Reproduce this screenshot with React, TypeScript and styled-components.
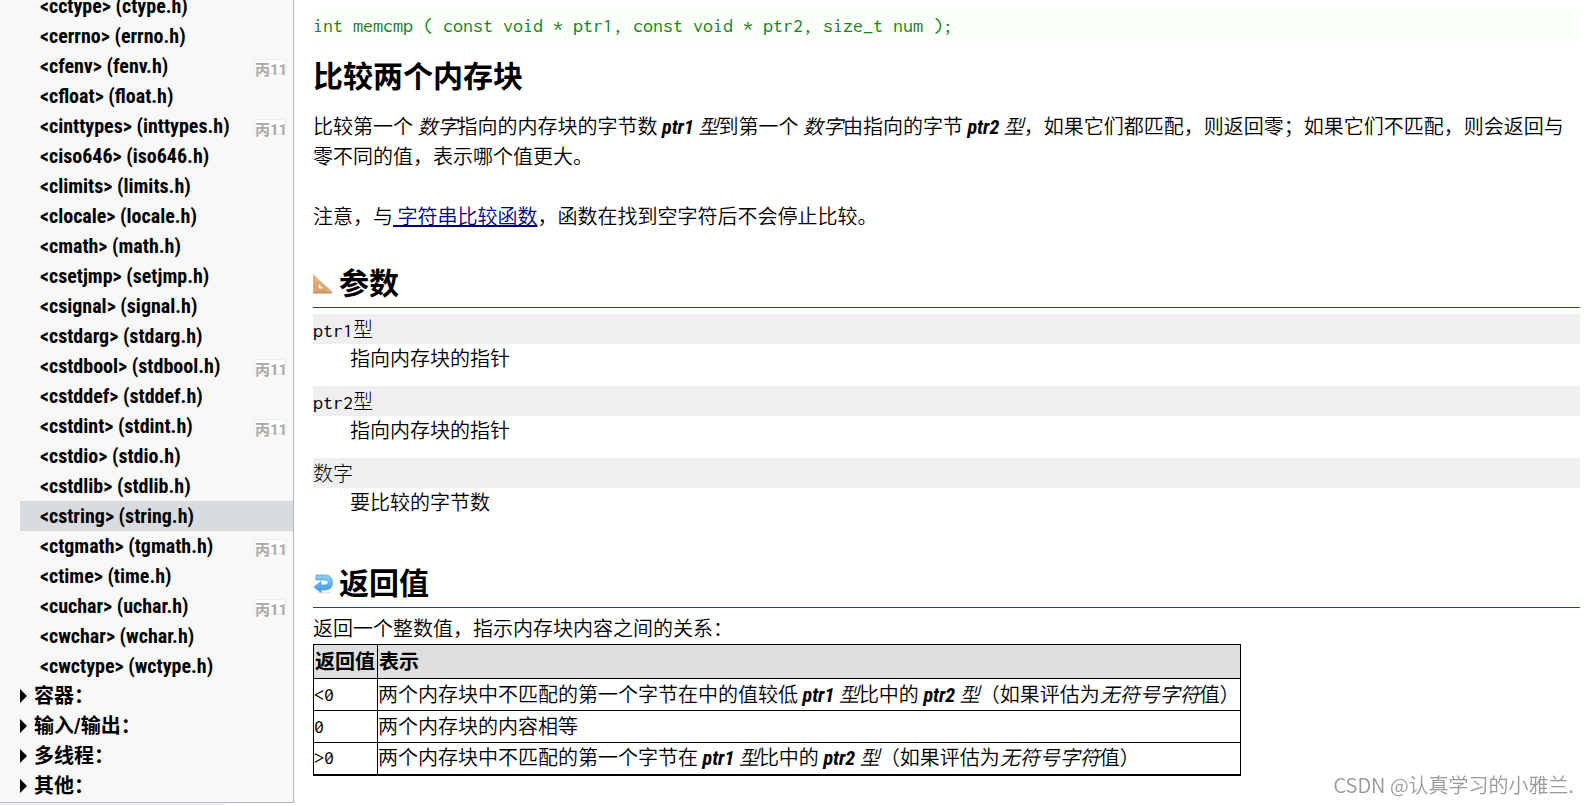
import React from "react";
import styled, { createGlobalStyle, css } from "styled-components";

const condensed = `"Roboto Condensed", "Liberation Sans Narrow", Roboto, "Noto Sans CJK SC", sans-serif`;
const mono = `Inconsolata, "Noto Sans Mono CJK SC", "Liberation Mono", monospace`;

const GlobalStyle = createGlobalStyle`
  * { box-sizing: border-box; }
  html, body { margin: 0; background: #fff; }
  body {
    font: 350 20px/30px ${condensed};
    color: #000;
    overflow: hidden;
  }
`;

const Page = styled.div`
  display: flex;
  align-items: flex-start;
  min-height: 100vh;
`;

const Side = styled.div`
  flex: 0 0 294px;
  overflow: hidden;
`;

const Sidebar = styled.nav`
  margin-top: -9px;
  padding-bottom: 1px;
  background: #f8f8f8;
  border-right: 1px solid #a9b8cb;
  border-bottom: 1px solid #a9b8cb;
`;

const NextPanelEdge = styled.div`
  width: 225px;
  height: 2px;
  margin-top: 1px;
  background: #dfdfdf;
  border-top-right-radius: 2px;
`;

const List = styled.ul`
  list-style: none;
  margin: 0;
  padding: 0 0 0 20px;
`;

const HeaderItem = styled.li<{ $current?: boolean }>`
  display: flex;
  align-items: center;
  justify-content: space-between;
  height: 30px;
  padding: 0 7px 0 20px;
  ${(p) => p.$current && css`background: #d8dbe0;`}
`;

const HeaderLink = styled.a`
  color: #000;
  font-weight: 700;
  text-decoration: none;
  white-space: nowrap;
`;

const Badge = styled.span`
  height: 15px;
  width: 32px;
  border: 1px solid #ececec;
  border-radius: 3px;
  background: #fff;
  color: #aaa;
  font: 700 15px/20px Roboto, "Noto Sans CJK SC", sans-serif;
  white-space: nowrap;
`;

const GroupButton = styled.button`
  display: flex;
  align-items: center;
  gap: 7px;
  height: 30px;
  padding: 0;
  border: 0;
  background: none;
  color: #000;
  font: 700 20px/30px ${condensed};
`;

const Main = styled.main`
  flex: 1;
  min-width: 0;
  padding: 11px 8px 0 19px;
`;

const Prototype = styled.pre`
  margin: 0;
  height: 30px;
  background: #fafffa;
  color: #1a7f1a;
  font: 400 20px/30px ${mono};
`;

const Title = styled.h1`
  margin: 16px 0 15px;
  font: 700 30px/40px ${condensed};
`;

const Text = styled.p`
  margin: 0;
  & + & { margin-top: 30px; }
`;

const Var = styled.i`
  b { font-weight: 700; }
`;

const Link = styled.a`
  color: #000080;
  text-decoration: underline;
`;

const Section = styled.section`
  margin-top: 32px;
`;

const SectionTitle = styled.h2`
  display: flex;
  align-items: center;
  gap: 6px;
  height: 44px;
  margin: 0 0 6px;
  padding-bottom: 3px;
  border-bottom: 1px solid #224488;
  font: 700 30px/40px ${condensed};
`;

const Params = styled.dl`
  margin: 0 0 46px;
`;

const ParamName = styled.dt`
  height: 30px;
  background: #efefef;
  font: 400 20px/30px ${mono};
`;

const Hanzi = styled.span`
  font-family: "Noto Sans CJK SC", sans-serif;
  font-weight: 300;
`;

const ParamText = styled.dd`
  margin: 0 0 12px 37px;
`;

const Table = styled.table`
  border-collapse: collapse;
  border: 1px solid #000;
  border-bottom-width: 2px;
`;

const Th = styled.th`
  height: 34px;
  padding: 0 2px 0 1px;
  border: 1px solid #000;
  background: #dfdfdf;
  text-align: left;
  font-weight: 700;
`;

const Td = styled.td<{ $code?: boolean }>`
  height: 32px;
  padding: 0;
  border: 1px solid #000;
  ${(p) => p.$code && css`font: 400 20px/30px ${mono};`}
`;

const Watermark = styled.div`
  position: fixed;
  right: 14px;
  bottom: 5px;
  color: #999;
  font: 350 20px/30px "Noto Sans CJK SC", sans-serif;
`;

const headers: [string, boolean?][] = [
  ["ctype"], ["errno"], ["fenv", true], ["float"], ["inttypes", true], ["iso646"],
  ["limits"], ["locale"], ["math"], ["setjmp"], ["signal"], ["stdarg"],
  ["stdbool", true], ["stddef"], ["stdint", true], ["stdio"], ["stdlib"],
  ["string"], ["tgmath", true], ["time"], ["uchar", true], ["wchar"], ["wctype"],
];

const groups = ["容器：", "输入/输出：", "多线程：", "其他："];

const Arrow = () => (
  <svg width="7" height="14" viewBox="0 0 7 14" aria-hidden="true">
    <path d="M0 0L7 7L0 14Z" fill="#000" />
  </svg>
);

const SetSquare = () => (
  <svg width="20" height="20" viewBox="0 0 20 20" aria-hidden="true">
    <defs>
      <linearGradient id="wood" x1="0" y1="0" x2="0" y2="1">
        <stop offset="0" stopColor="#eebf90" />
        <stop offset="1" stopColor="#d9a26f" />
      </linearGradient>
    </defs>
    <path d="M0 0L19 17.500V19H0Z" fill="url(#wood)" />
    <path d="M0 19H19" stroke="#b08560" />
    <path d="M5 8.500L12 15H5Z" fill="#fff8f0" stroke="#c98f60" />
    <path d="M7 12L9 13.500H7Z" fill="#e9bd92" />
    <path d="M1 3.500h1.500M1 6h1.500M1 8.500h1.500M1 11h1.500M1 13.500h1.500M4 18v-1M7 18v-1M10 18v-1M13 18v-1" stroke="#b9794a" strokeWidth="0.600" />
  </svg>
);

const ReturnArrow = () => (
  <svg width="20" height="20" viewBox="0 0 20 20" aria-hidden="true">
    <defs>
      <linearGradient id="water" x1="0" y1="0" x2="0" y2="1">
        <stop offset="0" stopColor="#8fd0f5" />
        <stop offset="0.500" stopColor="#5fb6ee" />
        <stop offset="1" stopColor="#3a96df" />
      </linearGradient>
    </defs>
    <ellipse cx="11" cy="18.500" rx="7" ry="1" fill="#e4e4e4" />
    <path
      d="M3 1H12C17 1 19.500 4 19.500 8.500S17 16 12 16H8V18.500L1 13L8 7.500V11H12C14 11 15 10 15 8.500S14 6 12 6H3Z"
      fill="url(#water)"
      stroke="#4a9ad8"
      strokeWidth="0.700"
    />
  </svg>
);

export default function App() {
  return (
    <>
      <GlobalStyle />
      <Page>
        <Side>
          <Sidebar>
            <List>
              {headers.map(([name, c11]) => (
                <HeaderItem key={name} $current={name === "string"}>
                  <HeaderLink href={`#${name}`}>{`<c${name}> (${name}.h)`}</HeaderLink>
                  {c11 && <Badge>丙11</Badge>}
                </HeaderItem>
              ))}
              {groups.map((g) => (
                <li key={g}>
                  <GroupButton type="button"><Arrow />{g}</GroupButton>
                </li>
              ))}
            </List>
          </Sidebar>
          <NextPanelEdge />
        </Side>
        <Main>
          <Prototype>int memcmp ( const void * ptr1, const void * ptr2, size_t num );</Prototype>
          <Title>比较两个内存块</Title>
          <Text>
            比较第一个 <Var>数字</Var>指向的内存块的字节数 <Var><b>ptr1 </b>型</Var>到第一个 <Var>数字</Var>由指向的字节 <Var><b>ptr2 </b>型</Var>，如果它们都匹配，则返回零；如果它们不匹配，则会返回与零不同的值，表示哪个值更大。
          </Text>
          <Text>
            注意，与<Link href="#strcmp"> 字符串比较函数</Link>，函数在找到空字符后不会停止比较。
          </Text>
          <Section>
            <SectionTitle><SetSquare />参数</SectionTitle>
            <Params>
              <ParamName>ptr1<Hanzi>型</Hanzi></ParamName>
              <ParamText>指向内存块的指针</ParamText>
              <ParamName>ptr2<Hanzi>型</Hanzi></ParamName>
              <ParamText>指向内存块的指针</ParamText>
              <ParamName><Hanzi>数字</Hanzi></ParamName>
              <ParamText>要比较的字节数</ParamText>
            </Params>
          </Section>
          <Section>
            <SectionTitle><ReturnArrow />返回值</SectionTitle>
            <Text>返回一个整数值，指示内存块内容之间的关系：</Text>
            <Table>
              <thead>
                <tr><Th>返回值</Th><Th>表示</Th></tr>
              </thead>
              <tbody>
                <tr>
                  <Td $code>&lt;0</Td>
                  <Td>两个内存块中不匹配的第一个字节在中的值较低 <Var><b>ptr1 </b>型</Var>比中的 <Var><b>ptr2 </b>型</Var>（如果评估为<Var>无符号字符</Var>值）</Td>
                </tr>
                <tr><Td $code>0</Td><Td>两个内存块的内容相等</Td></tr>
                <tr>
                  <Td $code>&gt;0</Td>
                  <Td>两个内存块中不匹配的第一个字节在 <Var><b>ptr1 </b>型</Var>比中的 <Var><b>ptr2 </b>型</Var>（如果评估为<Var>无符号字符</Var>值）</Td>
                </tr>
              </tbody>
            </Table>
          </Section>
        </Main>
      </Page>
      <Watermark>CSDN @认真学习的小雅兰.</Watermark>
    </>
  );
}
